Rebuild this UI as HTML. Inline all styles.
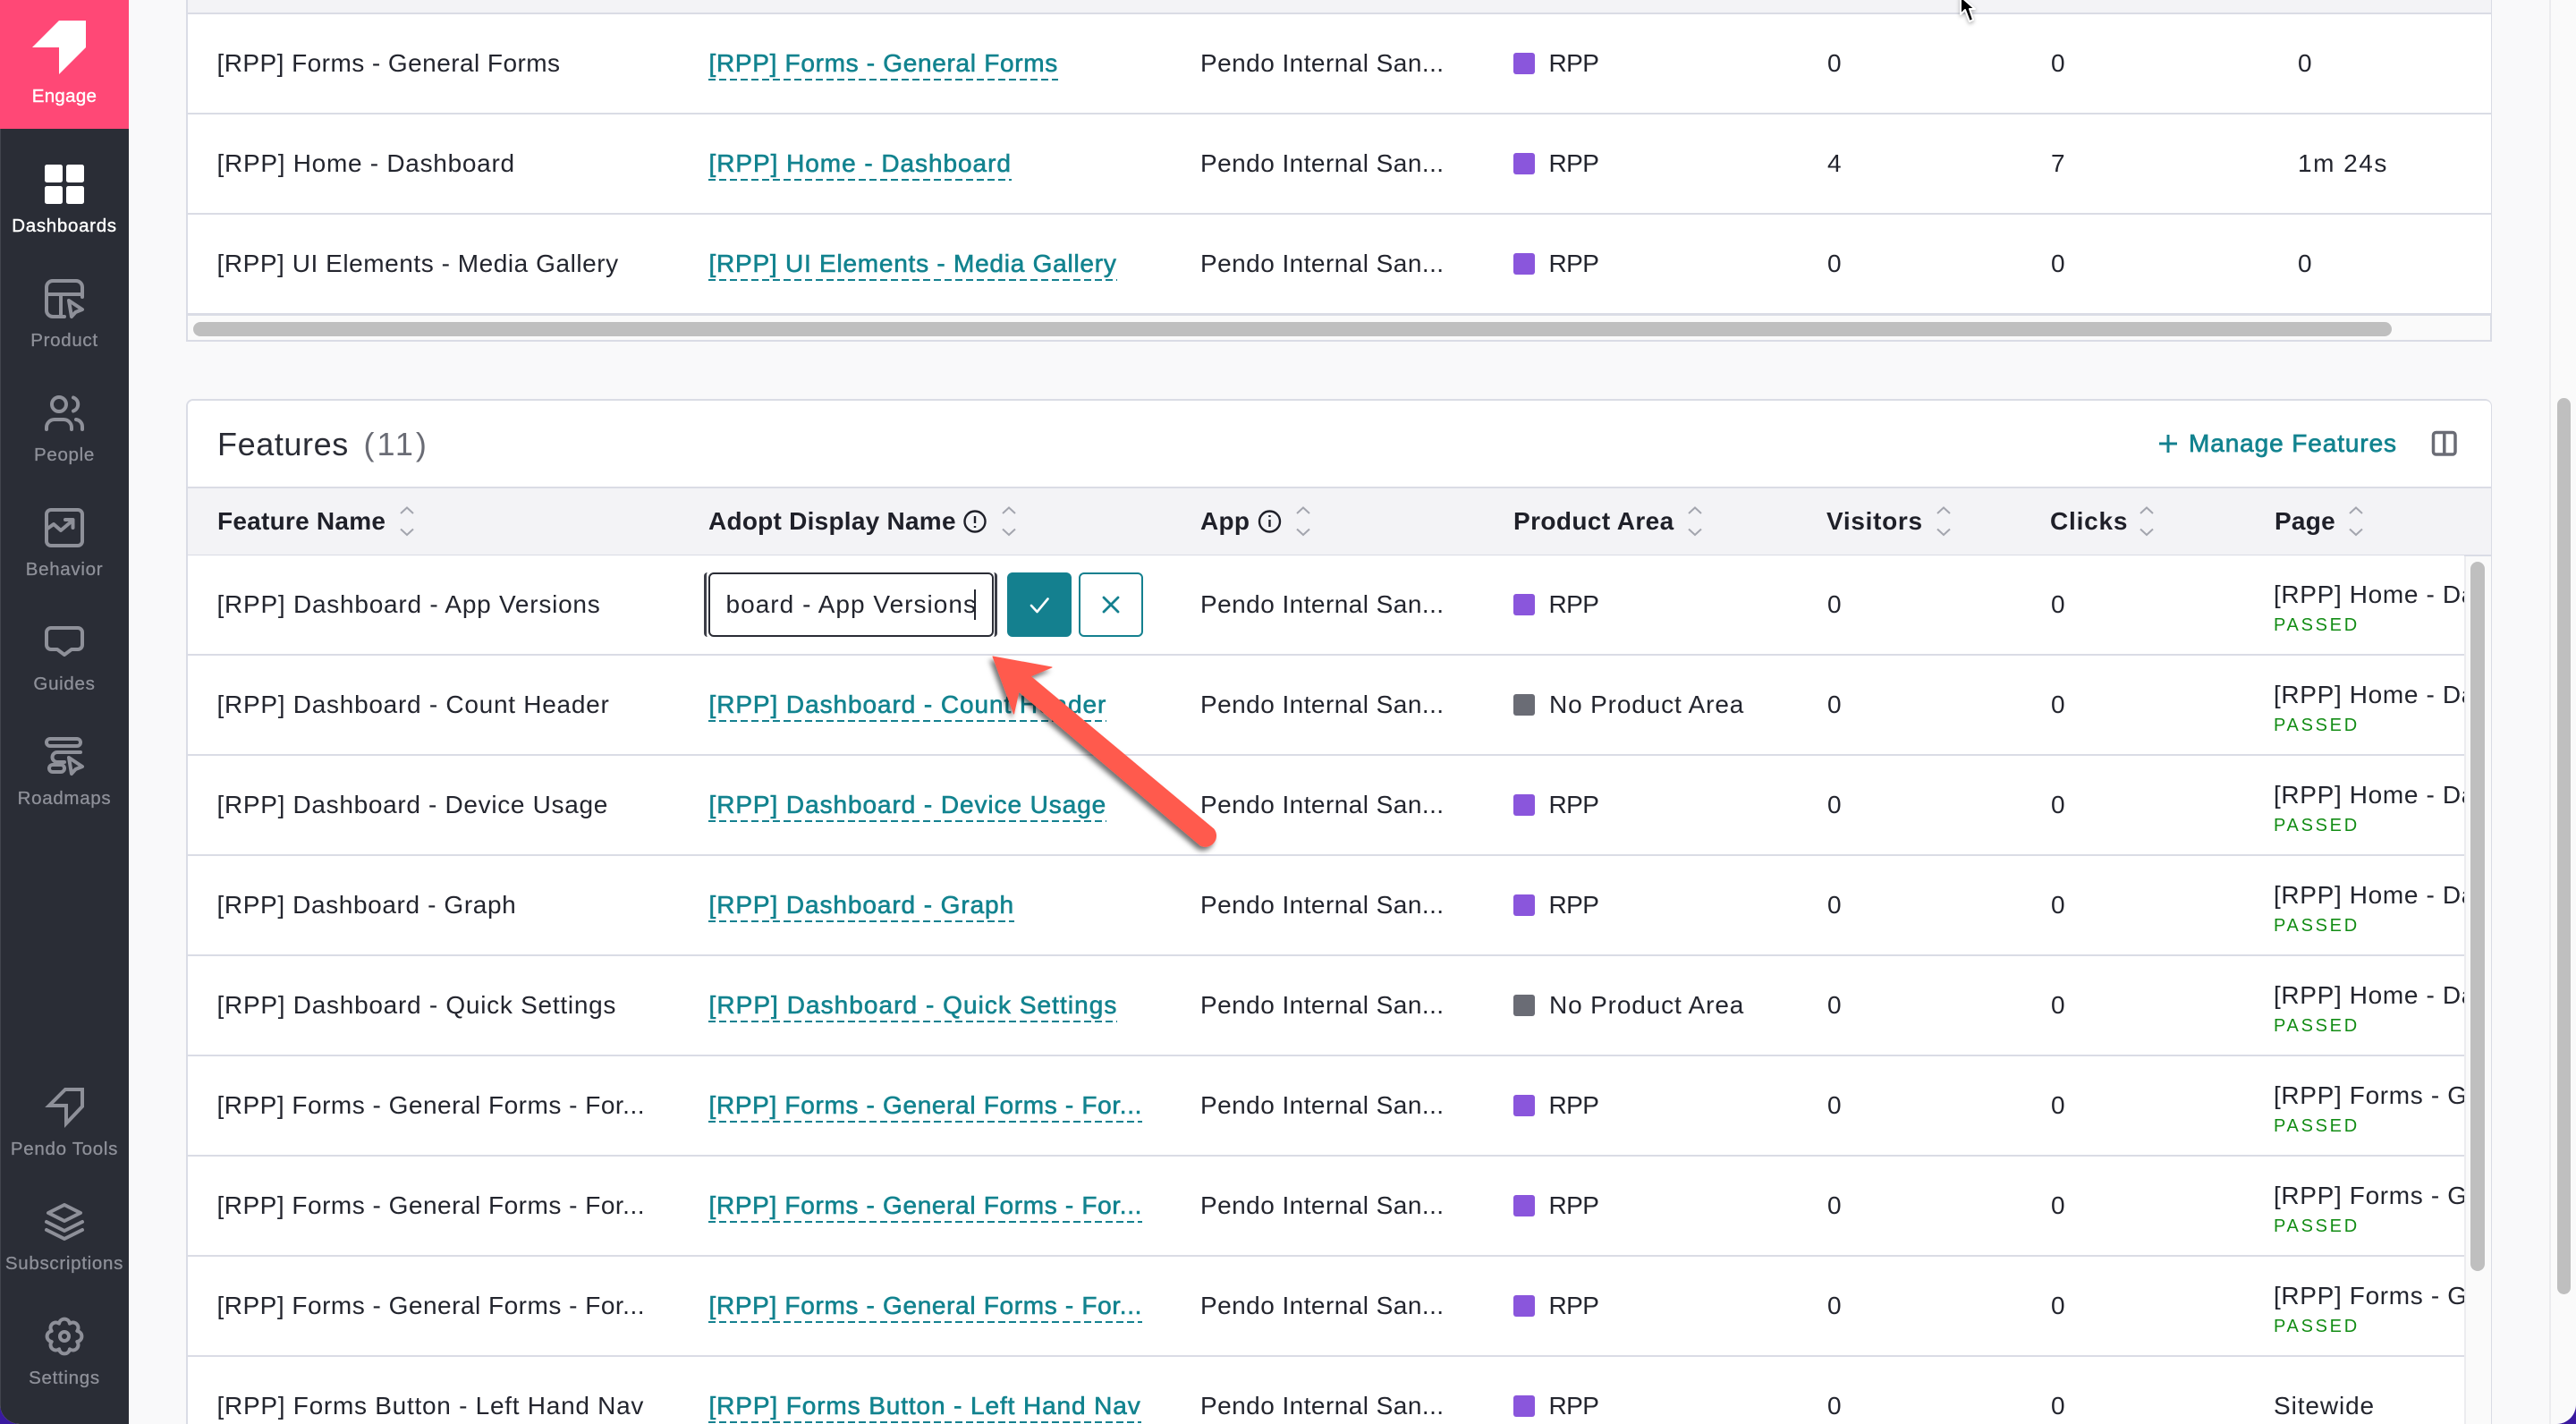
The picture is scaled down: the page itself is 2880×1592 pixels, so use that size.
<!DOCTYPE html>
<html lang="en"><head><meta charset="utf-8"><title>Pendo Engage - Features</title>
<style>
html,body{margin:0;padding:0;width:2880px;height:1592px;overflow:hidden;background:#3a1aa0;}
*{box-sizing:border-box;}
#app{position:absolute;left:0;top:0;width:2880px;height:1592px;overflow:hidden;background:#f9f9fa;border-radius:0 0 22px 22px;font-family:"Liberation Sans",sans-serif;color:#23252e;font-size:28px;}
.abs{position:absolute;}
.card{position:absolute;background:#fff;border:2px solid #dadce5;}
.r{position:absolute;left:210px;height:112px;border-bottom:2px solid #dadce5;background:#fff;line-height:110px;white-space:nowrap;letter-spacing:.3px;}
.w1{width:2575px;}
.w2{width:2545px;}
.r>div,.r>a{position:absolute;top:0;}
.c1{left:32.5px;}
.c2{left:582.5px;color:#12838f;letter-spacing:.62px;-webkit-text-stroke:.6px #12838f;text-decoration:none;}
.c2:after{content:"";position:absolute;left:-.5px;right:0;top:72px;height:2px;background:repeating-linear-gradient(90deg,#14808f 0 8px,transparent 8px 12px);}
.c3{left:1132px;letter-spacing:.45px;}
.sw{left:1482px;top:43px!important;width:24px;height:24px;border-radius:3px;background:#8a56dc;}
.sw.g{background:#6a6c75;}
.c4{left:1521.5px;letter-spacing:-.6px;}
.c4.n{left:1522px;letter-spacing:.85px;}
.c5{left:1833px;}
.c6{left:2083px;}
.c7{left:2332px;width:213px;height:110px;overflow:hidden;letter-spacing:.65px;}
.c7t{left:2359px;}
.pg{position:absolute;left:0;top:0;line-height:34px;padding-top:27px;white-space:nowrap;}
.pg span{display:block;font-size:20px;line-height:32px;letter-spacing:2.7px;color:#128c14;margin-top:1px;}
.th{position:absolute;top:545px;line-height:76px;font-weight:700;font-size:28px;letter-spacing:.25px;color:#1f2029;white-space:nowrap;}
.nav{position:absolute;left:0;width:144px;text-align:center;font-size:20.5px;letter-spacing:.7px;line-height:26px;color:#8e9099;-webkit-text-stroke:.3px #8e9099;white-space:nowrap;}
.nav.on{color:#fff;-webkit-text-stroke:.4px #fff;}
</style></head>
<body>
<div id="app">

<!-- Top table -->
<div class="card" style="left:208px;top:-6px;width:2578px;height:388px;background:#fafafa;"></div>
<div class="abs" style="left:210px;top:0;width:2575px;height:16px;background:#f3f3f6;border-bottom:2px solid #dadce5;"></div>
<div class="r w1" style="top:16px;"><div class="c1" style="letter-spacing:.45px">[RPP] Forms - General Forms</div><a class="c2" style="letter-spacing:.69px">[RPP] Forms - General Forms</a><div class="c3">Pendo Internal San...</div><div class="sw"></div><div class="c4">RPP</div><div class="c5">0</div><div class="c6">0</div><div class="c7t">0</div></div>
<div class="r w1" style="top:128px;"><div class="c1" style="letter-spacing:.72px">[RPP] Home - Dashboard</div><a class="c2" style="letter-spacing:.95px">[RPP] Home - Dashboard</a><div class="c3">Pendo Internal San...</div><div class="sw"></div><div class="c4">RPP</div><div class="c5">4</div><div class="c6">7</div><div class="c7t" style="letter-spacing:1.5px">1m 24s</div></div>
<div class="r w1" style="top:240px;height:113px;border-bottom-width:3px;"><div class="c1" style="letter-spacing:.55px">[RPP] UI Elements - Media Gallery</div><a class="c2" style="letter-spacing:.76px">[RPP] UI Elements - Media Gallery</a><div class="c3">Pendo Internal San...</div><div class="sw"></div><div class="c4">RPP</div><div class="c5">0</div><div class="c6">0</div><div class="c7t">0</div></div>
<div class="abs" style="left:216px;top:360px;width:2458px;height:16px;border-radius:8px;background:#bfbfbf;"></div>

<!-- Features card -->
<div class="card" style="left:208px;top:446px;width:2578px;height:1200px;border-radius:8px 8px 0 0;background:#fafafa;"></div>
<div class="abs" style="left:210px;top:448px;width:2575px;height:97px;background:#fff;border-radius:6px 6px 0 0;"></div>
<div class="abs" style="left:210px;top:544px;width:2575px;height:78px;background:#f3f3f6;border-top:2px solid #dadce5;border-bottom:2px solid #dadce5;"></div>
<div class="abs" style="left:243px;top:471.5px;font-size:36px;line-height:50px;letter-spacing:.6px;color:#2a2c35;">Features</div>
<div class="abs" style="left:406.5px;top:471.5px;font-size:36px;line-height:50px;letter-spacing:3px;color:#6a6c75;">(11)</div>
<div class="abs" style="left:2447px;top:472px;font-size:28px;line-height:48px;letter-spacing:.9px;color:#12838f;-webkit-text-stroke:.7px #12838f;white-space:nowrap;">Manage Features</div>

<div class="th" style="left:243px;">Feature Name</div>
<div class="th" style="left:792px;">Adopt Display Name</div>
<div class="th" style="left:1342px;">App</div>
<div class="th" style="left:1692px;letter-spacing:.4px;">Product Area</div>
<div class="th" style="left:2042px;letter-spacing:.7px;">Visitors</div>
<div class="th" style="left:2292px;letter-spacing:.8px;">Clicks</div>
<div class="th" style="left:2543px;">Page</div>

<!-- Feature rows -->
<div class="r w2" style="top:621px;"><div class="c1" style="letter-spacing:.76px">[RPP] Dashboard - App Versions</div><div class="c3">Pendo Internal San...</div><div class="sw"></div><div class="c4">RPP</div><div class="c5">0</div><div class="c6">0</div><div class="c7"><div class="pg">[RPP] Home - Dashboard<span>PASSED</span></div></div></div>
<div class="r w2" style="top:733px;"><div class="c1" style="letter-spacing:.73px">[RPP] Dashboard - Count Header</div><a class="c2" style="letter-spacing:.92px">[RPP] Dashboard - Count Header</a><div class="c3">Pendo Internal San...</div><div class="sw g"></div><div class="c4 n">No Product Area</div><div class="c5">0</div><div class="c6">0</div><div class="c7"><div class="pg">[RPP] Home - Dashboard<span>PASSED</span></div></div></div>
<div class="r w2" style="top:845px;"><div class="c1" style="letter-spacing:.68px">[RPP] Dashboard - Device Usage</div><a class="c2" style="letter-spacing:.92px">[RPP] Dashboard - Device Usage</a><div class="c3">Pendo Internal San...</div><div class="sw"></div><div class="c4">RPP</div><div class="c5">0</div><div class="c6">0</div><div class="c7"><div class="pg">[RPP] Home - Dashboard<span>PASSED</span></div></div></div>
<div class="r w2" style="top:957px;"><div class="c1" style="letter-spacing:.62px">[RPP] Dashboard - Graph</div><a class="c2" style="letter-spacing:.91px">[RPP] Dashboard - Graph</a><div class="c3">Pendo Internal San...</div><div class="sw"></div><div class="c4">RPP</div><div class="c5">0</div><div class="c6">0</div><div class="c7"><div class="pg">[RPP] Home - Dashboard<span>PASSED</span></div></div></div>
<div class="r w2" style="top:1069px;"><div class="c1" style="letter-spacing:.73px">[RPP] Dashboard - Quick Settings</div><a class="c2" style="letter-spacing:1.05px">[RPP] Dashboard - Quick Settings</a><div class="c3">Pendo Internal San...</div><div class="sw g"></div><div class="c4 n">No Product Area</div><div class="c5">0</div><div class="c6">0</div><div class="c7"><div class="pg">[RPP] Home - Dashboard<span>PASSED</span></div></div></div>
<div class="r w2" style="top:1181px;"><div class="c1" style="letter-spacing:.5px">[RPP] Forms - General Forms - For...</div><a class="c2" style="letter-spacing:.67px">[RPP] Forms - General Forms - For...</a><div class="c3">Pendo Internal San...</div><div class="sw"></div><div class="c4">RPP</div><div class="c5">0</div><div class="c6">0</div><div class="c7"><div class="pg">[RPP] Forms - General Forms<span>PASSED</span></div></div></div>
<div class="r w2" style="top:1293px;"><div class="c1" style="letter-spacing:.5px">[RPP] Forms - General Forms - For...</div><a class="c2" style="letter-spacing:.67px">[RPP] Forms - General Forms - For...</a><div class="c3">Pendo Internal San...</div><div class="sw"></div><div class="c4">RPP</div><div class="c5">0</div><div class="c6">0</div><div class="c7"><div class="pg">[RPP] Forms - General Forms<span>PASSED</span></div></div></div>
<div class="r w2" style="top:1405px;"><div class="c1" style="letter-spacing:.5px">[RPP] Forms - General Forms - For...</div><a class="c2" style="letter-spacing:.67px">[RPP] Forms - General Forms - For...</a><div class="c3">Pendo Internal San...</div><div class="sw"></div><div class="c4">RPP</div><div class="c5">0</div><div class="c6">0</div><div class="c7"><div class="pg">[RPP] Forms - General Forms<span>PASSED</span></div></div></div>
<div class="r w2" style="top:1517px;"><div class="c1" style="letter-spacing:.73px">[RPP] Forms Button - Left Hand Nav</div><a class="c2" style="letter-spacing:.89px">[RPP] Forms Button - Left Hand Nav</a><div class="c3">Pendo Internal San...</div><div class="sw"></div><div class="c4">RPP</div><div class="c5">0</div><div class="c6">0</div><div class="c7" style="letter-spacing:.9px">Sitewide</div></div>

<!-- Inline edit -->
<div class="abs" style="left:787px;top:640px;width:328px;height:72px;border-left:3px solid #3c3e47;border-right:3px solid #3c3e47;border-radius:4px;"></div>
<div class="abs" style="left:792px;top:640px;width:319px;height:72px;border:2px solid #2a2c35;border-radius:6px;background:#fff;overflow:hidden;line-height:68px;white-space:nowrap;"><span style="position:absolute;left:17.5px;top:0;letter-spacing:1.03px;">board - App Versions</span></div>
<div class="abs" style="left:1089px;top:659px;width:2px;height:34px;background:#23252e;"></div>
<div class="abs" style="left:1126px;top:640px;width:72px;height:72px;border-radius:6px;background:#14808f;"></div>
<div class="abs" style="left:1206px;top:640px;width:72px;height:72px;border-radius:6px;background:#fff;border:2px solid #14808f;"></div>

<!-- Inner & page scrollbars -->
<div class="abs" style="left:2755px;top:622px;width:30px;height:970px;background:#fafafa;border-left:2px solid #ececef;"></div>
<div class="abs" style="left:2762px;top:628px;width:16px;height:793px;border-radius:8px;background:#bfbfbf;"></div>
<div class="abs" style="left:2850px;top:0;width:30px;height:1592px;background:#fafafa;border-left:2px solid #ececef;"></div>
<div class="abs" style="left:2859px;top:445px;width:15px;height:1002px;border-radius:8px;background:#bfbfbf;"></div>

<!-- Sidebar -->
<div class="abs" style="left:0;top:0;width:144px;height:1592px;background:#2a2d36;border-left:1px solid #41444d;"></div>
<div class="abs" style="left:0;top:0;width:144px;height:144px;background:#ff4876;"></div>
<div class="nav on" style="top:95px;letter-spacing:.3px;">Engage</div>
<div class="nav on" style="top:240px;">Dashboards</div>
<div class="nav" style="top:368px;">Product</div>
<div class="nav" style="top:496px;">People</div>
<div class="nav" style="top:624px;">Behavior</div>
<div class="nav" style="top:752px;">Guides</div>
<div class="nav" style="top:880px;">Roadmaps</div>
<div class="nav" style="top:1272px;">Pendo Tools</div>
<div class="nav" style="top:1400px;">Subscriptions</div>
<div class="nav" style="top:1528px;">Settings</div>

<!-- All icons, real pixel coordinates -->
<svg class="abs" style="left:0;top:0;" width="2880" height="1592" viewBox="0 0 2880 1592" fill="none">
  <polygon points="36,53 66,23 96,23 96,53 66,83 66,53" fill="#fff"/>
  <g fill="#fff">
    <rect x="50" y="184" width="20" height="20" rx="2.5"/><rect x="74" y="184" width="20" height="20" rx="2.5"/>
    <rect x="50" y="208" width="20" height="20" rx="2.5"/><rect x="74" y="208" width="20" height="20" rx="2.5"/>
  </g>
  <g stroke="#8e9099" stroke-width="4" stroke-linejoin="round" stroke-linecap="round">
    <!-- product -->
    <path d="M92 332V321a7 7 0 0 0-7-7H59a7 7 0 0 0-7 7v26a7 7 0 0 0 7 7h13M52 329H92M68 329V354"/>
    <polygon points="77,336 92,346 84.500,349 80,354"/>
    <!-- people -->
    <circle cx="66" cy="452" r="8"/>
    <path d="M82 444.500a8 8 0 0 1 0 15M52 480v-2a9 9 0 0 1 9-9h10a9 9 0 0 1 9 9v2M85 469a8 8 0 0 1 7 8v3"/>
    <!-- behavior -->
    <rect x="52" y="570" width="40" height="40" rx="5"/>
    <path d="M53 591L60 586L68 593L81 582M73 581H81.500V590"/>
    <!-- guides -->
    <path d="M57 702H87a5 5 0 0 1 5 5v14a5 5 0 0 1-5 5h-7l-8 6-8-6h-7a5 5 0 0 1-5-5v-14a5 5 0 0 1 5-5z"/>
    <!-- roadmaps -->
    <rect x="52" y="826" width="38" height="8" rx="4"/>
    <path d="M90 841H64a5 5 0 0 0 0 11H72"/>
    <rect x="55" y="855" width="17" height="8" rx="4"/>
    <polygon points="77,847 92,857 84.500,860 80,865"/>
    <!-- pendo tools -->
    <polygon points="73,1218 92,1218 92,1237 74,1256 74,1236 55,1236" stroke-linejoin="miter"/>
    <!-- subscriptions -->
    <polygon points="54,1356 72,1347 90,1356 72,1365"/>
    <polyline points="52,1366 72,1376 92,1366"/>
    <polyline points="52,1375 72,1385 92,1375"/>
    <!-- settings -->
    <path d="M77.930 1479.680A6 6 0 0 1 86.320 1488.070A6 6 0 0 1 86.320 1499.930A6 6 0 0 1 77.930 1508.320A6 6 0 0 1 66.070 1508.320A6 6 0 0 1 57.680 1499.930A6 6 0 0 1 57.680 1488.070A6 6 0 0 1 66.070 1479.680A6 6 0 0 1 77.930 1479.680Z"/>
    <circle cx="72" cy="1494" r="5"/>
  </g>
  <!-- sort chevrons -->
  <g stroke="#a3a5ae" stroke-width="2" fill="none">
    <path d="M448 574l7-6.500 7 6.500M448 591.500l7 6.500 7-6.500"/>
    <path d="M1121 574l7-6.500 7 6.500M1121 591.500l7 6.500 7-6.500"/>
    <path d="M1450 574l7-6.500 7 6.500M1450 591.500l7 6.500 7-6.500"/>
    <path d="M1888 574l7-6.500 7 6.500M1888 591.500l7 6.500 7-6.500"/>
    <path d="M2166 574l7-6.500 7 6.500M2166 591.500l7 6.500 7-6.500"/>
    <path d="M2393 574l7-6.500 7 6.500M2393 591.500l7 6.500 7-6.500"/>
    <path d="M2627 574l7-6.500 7 6.500M2627 591.500l7 6.500 7-6.500"/>
  </g>
  <!-- info icons -->
  <g stroke="#1f2029" stroke-width="2.400" fill="none">
    <circle cx="1090" cy="583" r="11.500"/><path d="M1090 577v8M1090 588v2"/>
    <circle cx="1419.500" cy="583" r="11.500"/><path d="M1419.500 581v8M1419.500 576v2"/>
  </g>
  <!-- manage features plus, columns -->
  <path d="M2424 486v20M2414 496h20" stroke="#14808f" stroke-width="3"/>
  <rect x="2720.500" y="483.500" width="24.500" height="24.500" rx="3" stroke="#6a6c75" stroke-width="3.500"/>
  <path d="M2732.800 484v24" stroke="#6a6c75" stroke-width="3.500"/>
  <!-- check / x -->
  <path d="M1153 677l6.500 7 12-14.500" stroke="#fff" stroke-width="2.600" stroke-linecap="round" stroke-linejoin="round"/>
  <path d="M1234 668l16 16M1250 668l-16 16" stroke="#14808f" stroke-width="2.800" stroke-linecap="round"/>
  <!-- annotation arrow -->
  <defs><filter id="ds" x="-20%" y="-20%" width="140%" height="140%"><feDropShadow dx="-3" dy="4" stdDeviation="3" flood-color="#000" flood-opacity=".55"/></filter></defs>
  <g filter="url(#ds)">
    <path d="M1110 734L1176 746L1152 756L1357 927A12 12 0 0 1 1342 945L1139 773L1133.500 798Z" fill="#ff5a4d" stroke="#ff5a4d" stroke-width="1" stroke-linejoin="round"/>
  </g>
  <!-- mouse pointer -->
  <polygon points="2192,-4 2192,16 2197,11 2202,24 2206,22 2202,10 2208,10" fill="#000" stroke="#fff" stroke-width="2" stroke-linejoin="round" style="filter:drop-shadow(0 2px 2px rgba(0,0,0,.3))"/>
</svg>
</div>
</body></html>
